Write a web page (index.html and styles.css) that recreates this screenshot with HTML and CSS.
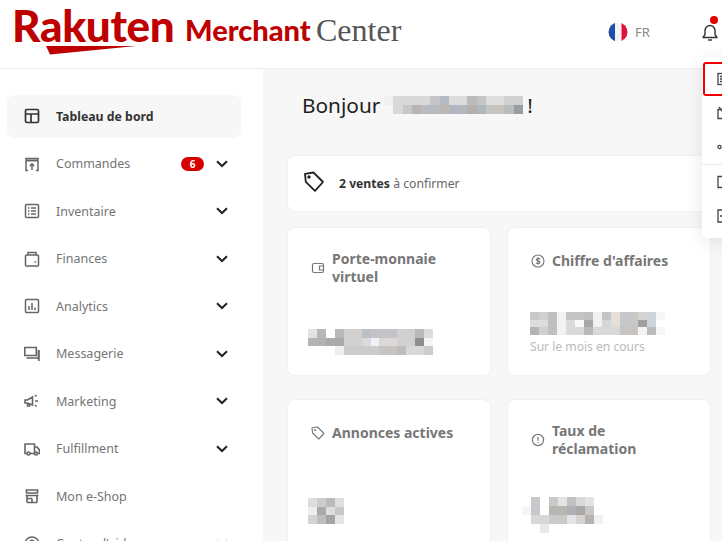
FILE: index.html
```html
<!DOCTYPE html>
<html lang="fr">
<head>
<meta charset="utf-8">
<title>Rakuten Merchant Center</title>
<link rel="stylesheet" href="styles.css">
</head>
<body>
<div class="page">
  <header class="header">
    <div class="logo">
      <div class="logo-rakuten">
        <span class="logo-word">Rakuten</span>
        <svg class="logo-swoosh" width="90" height="9" viewBox="0 0 90 9"><path d="M0 0H90L4 8.500Z" fill="#bf0000"/></svg>
      </div>
      <span class="logo-merchant">Merchant</span>
      <span class="logo-center">Center</span>
    </div>
    <div class="header-tools">
      <svg class="flag" width="20" height="20" viewBox="0 0 20 20"><defs><clipPath id="fc"><circle cx="10" cy="10" r="9.500"/></clipPath></defs><g clip-path="url(#fc)"><rect width="7" height="20" fill="#1f4fa8"/><rect x="7" width="6.500" height="20" fill="#f4f4f4"/><rect x="13.500" width="7" height="20" fill="#e0103a"/></g></svg>
      <span class="lang">FR</span>
      <span class="bell">
        <svg width="18" height="20" viewBox="0 0 18 20" fill="none" stroke="#333" stroke-width="1.400"><path d="M2 15.500h14l-2-3V8.500a5 5 0 0 0-10 0v4Z" stroke-linejoin="round"/><path d="M7 18h4"/></svg>
        <i class="bell-dot"></i>
      </span>
    </div>
  </header>
  <div class="body">
    <nav class="sidebar">
      <a class="nav-item active">
        <svg class="nav-icon" viewBox="0 0 16 16" fill="none" stroke="#333" stroke-width="1.700"><rect x="1.500" y="1.500" width="13" height="13" rx="1.500"/><path d="M1.500 6h13M7 6v8.500"/></svg>
        <span class="nav-label">Tableau de bord</span>
      </a>
      <a class="nav-item">
        <svg class="nav-icon" viewBox="0 0 16 16" fill="none" stroke="#666" stroke-width="1.500"><path d="M4 14.500H2V2.500h12v12h-2"/><path d="M2 4.500h12" stroke-width="2"/><path d="M8 14V8M5.800 10 8 7.800 10.200 10"/></svg>
        <span class="nav-label">Commandes</span>
        <span class="badge">6</span>
        <svg class="chev" viewBox="0 0 12 8" fill="none" stroke="#222" stroke-width="2"><path d="M1 1.200 6 6l5-4.800"/></svg>
      </a>
      <a class="nav-item">
        <svg class="nav-icon" viewBox="0 0 16 16" fill="none" stroke="#666" stroke-width="1.500"><rect x="1.500" y="1.500" width="13" height="13" rx="1"/><path d="M4 5h1.500M7 5h5M4 8h1.500M7 8h5M4 11h1.500M7 11h5"/></svg>
        <span class="nav-label">Inventaire</span>
        <svg class="chev" viewBox="0 0 12 8" fill="none" stroke="#222" stroke-width="2"><path d="M1 1.200 6 6l5-4.800"/></svg>
      </a>
      <a class="nav-item">
        <svg class="nav-icon" viewBox="0 0 16 16" fill="none" stroke="#666" stroke-width="1.500"><rect x="1.500" y="4" width="13" height="11" rx="1"/><path d="M4 4V1.500h8V4"/><path d="M10.500 11h1.500"/></svg>
        <span class="nav-label">Finances</span>
        <svg class="chev" viewBox="0 0 12 8" fill="none" stroke="#222" stroke-width="2"><path d="M1 1.200 6 6l5-4.800"/></svg>
      </a>
      <a class="nav-item">
        <svg class="nav-icon" viewBox="0 0 16 16" fill="none" stroke="#666" stroke-width="1.500"><rect x="1.500" y="1.500" width="13" height="13" rx="1"/><path d="M5 12V8M8 12V5M11 12v-2.500"/></svg>
        <span class="nav-label">Analytics</span>
        <svg class="chev" viewBox="0 0 12 8" fill="none" stroke="#222" stroke-width="2"><path d="M1 1.200 6 6l5-4.800"/></svg>
      </a>
      <a class="nav-item">
        <svg class="nav-icon" viewBox="0 0 16 16" fill="none" stroke="#666" stroke-width="1.600"><path d="M.8 1.500h11.500v8H.8Z"/><path d="M2.500 12h12V4" /><path d="M14.800 4v11" stroke-width="1.800"/></svg>
        <span class="nav-label">Messagerie</span>
        <svg class="chev" viewBox="0 0 12 8" fill="none" stroke="#222" stroke-width="2"><path d="M1 1.200 6 6l5-4.800"/></svg>
      </a>
      <a class="nav-item">
        <svg class="nav-icon" viewBox="0 0 16 16" fill="none" stroke="#666" stroke-width="1.600"><path d="M1 7h2.500l5-3v8l-5-2H1Z"/><path d="M3.500 10v3h2v-2.500M11 3.500l1.500-1.500M11 8h3M11 12l1.500 1.500" /></svg>
        <span class="nav-label">Marketing</span>
        <svg class="chev" viewBox="0 0 12 8" fill="none" stroke="#222" stroke-width="2"><path d="M1 1.200 6 6l5-4.800"/></svg>
      </a>
      <a class="nav-item">
        <svg class="nav-icon" viewBox="0 0 16 16" fill="none" stroke="#666" stroke-width="1.600"><path d="M3 12.500H1V3h9.500v9.500H6"/><path d="M10.500 6h2.500l2.500 3v3.500H14"/><circle cx="4.500" cy="12.500" r="1.500"/><circle cx="12" cy="12.500" r="1.500"/></svg>
        <span class="nav-label">Fulfillment</span>
        <svg class="chev" viewBox="0 0 12 8" fill="none" stroke="#222" stroke-width="2"><path d="M1 1.200 6 6l5-4.800"/></svg>
      </a>
      <a class="nav-item">
        <svg class="nav-icon" viewBox="0 0 16 16" fill="none" stroke="#666" stroke-width="1.600"><path d="M2.500 2h11v3h-11ZM1.500 7.500h13M3 7.500V14.500M13 7.500V14.500M3 14.500h10M8 10.500H3M8 10.500v4"/></svg>
        <span class="nav-label">Mon e-Shop</span>
      </a>
      <a class="nav-item">
        <svg class="nav-icon" viewBox="0 0 16 16" fill="none" stroke="#666" stroke-width="1.500"><circle cx="8" cy="8" r="7"/><path d="M6 6.200a2 2 0 1 1 2.800 1.800c-.6.300-.8.700-.8 1.500M8 11.500v1"/></svg>
        <span class="nav-label">Centre d'aide</span>
        <svg class="chev" viewBox="0 0 12 8" fill="none" stroke="#222" stroke-width="2"><path d="M1 1.200 6 6l5-4.800"/></svg>
      </a>
    </nav>
    <main class="main">
      <h1 class="greeting">
        <span>Bonjour</span>
        <svg class="mosaic" width="139" height="18" viewBox="0 0 15 2" preserveAspectRatio="none" shape-rendering="crispEdges"><path fill="#f0f0f0" d="M0 0h1v1H0z"/><path fill="#d8d8da" d="M1 0h1v2H1z"/><path fill="#d9d9d9" d="M2 0h3v1H2z"/><path fill="#c8c8cc" d="M2 1h1v1H2z"/><path fill="#b9b4b2" d="M3 1h1v1H3z"/><path fill="#b7bcc0" d="M4 1h2v1H4z"/><path fill="#c6c6c6" d="M5 0h1v1H5z"/><path fill="#b5bac6" d="M6 0h1v1H6z"/><path fill="#bdb8b4" d="M6 1h1v1H6z"/><path fill="#afb5c2" d="M7 1h1v1H7z"/><path fill="#dcdcdc" d="M7 0h2v1H7z"/><path fill="#b3b8bc" d="M8 1h1v1H8z"/><path fill="#bbb" d="M9 0h1v1H9z"/><path fill="#b5b0ac" d="M9 1h1v1H9z"/><path fill="#c5c5c5" d="M10 0h1v1H10z"/><path fill="#afb8ba" d="M10 1h1v1H10z"/><path fill="#dedede" d="M11 0h2v1H11z"/><path fill="#c2c4c4" d="M11 1h1v1H11z"/><path fill="#c5c4b8" d="M12 1h1v1H12z"/><path fill="#d0d0d0" d="M13 0h2v1H13z"/><path fill="#b8bec0" d="M13 1h1v1H13z"/><path fill="#9a9ea4" d="M14 1h1v1H14z"/></svg>
        <span>!</span>
      </h1>
      <section class="alert">
        <svg class="alert-icon" width="22" height="22" viewBox="0 0 22 22" fill="none" stroke="#222" stroke-width="1.800" stroke-linejoin="round"><path d="M2 2.800 10.500 1.500 20 11 12 19.800 2.800 10.800Z"/><circle cx="6" cy="6" r=".8" fill="#222"/></svg>
        <p class="alert-text"><b>2 ventes</b> à confirmer</p>
      </section>
      <div class="cards">
        <article class="card">
          <div class="card-title">
            <svg class="card-icon" viewBox="0 0 14 14" fill="none" stroke="#777" stroke-width="1.200"><rect x="1.500" y="2.500" width="11" height="9" rx="1.500"/><path d="M12.500 5H8.500v4h4"/></svg>
            <span>Porte-monnaie virtuel</span>
          </div>
          <svg class="mosaic-v mosaic-wide" width="125" height="26" viewBox="0 0 14 3" preserveAspectRatio="none" shape-rendering="crispEdges"><path fill="#e4e2e2" d="M0 0h2v1H0z"/><path fill="#b9b6b6" d="M1 0h1v1H1z"/><path fill="#b5b2b2" d="M0 1h3v1H0z"/><path fill="#aaa" d="M2 1h2v1H2z"/><path fill="#eee" d="M3 2h1v1H3z"/><path fill="#b8b8b8" d="M3 0h1v1H3z"/><path fill="#d2d0d0" d="M4 0h2v2H4z"/><path fill="#ccc" d="M4 2h4v1H4z"/><path fill="#bcc0c4" d="M6 0h1v1H6z"/><path fill="#d8dadc" d="M6 1h1v1H6z"/><path fill="#c4c4c8" d="M7 0h2v1H7z"/><path fill="#eef2f4" d="M7 1h1v1H7z"/><path fill="#dcd8d6" d="M8 1h2v1H8z"/><path fill="#c8c4c4" d="M8 2h2v1H8z"/><path fill="#c2c4c8" d="M9 0h1v1H9z"/><path fill="#d0d0d0" d="M10 0h2v2H10z"/><path fill="#c2bcb8" d="M10 2h1v1H10z"/><path fill="#d8d8d8" d="M11 2h2v1H11z"/><path fill="#b8b8b8" d="M12 0h1v1H12z"/><path fill="#8e8e8e" d="M12 1h1v1H12z"/><path fill="#dcdcdc" d="M13 0h1v1H13z"/><path fill="#f2f4f6" d="M13 1h1v1H13z"/><path fill="#ccc" d="M13 2h1v1H13z"/></svg>
        </article>
        <article class="card">
          <div class="card-title card-title-single">
            <svg class="card-icon" viewBox="0 0 14 14" fill="none" stroke="#777" stroke-width="1.100"><circle cx="7" cy="7" r="6"/><path d="M9 5.200C8.500 4.200 5.200 4 5.200 5.600 5.200 7.200 9 6.600 9 8.400 9 10 5.500 9.800 5 8.800M7 3.300v7.400"/></svg>
            <span>Chiffre d'affaires</span>
          </div>
          <svg class="mosaic-v mosaic-shift" width="135" height="23" viewBox="0 0 15 3" preserveAspectRatio="none" shape-rendering="crispEdges"><path fill="#c8c8c8" d="M0 0h1v1H0z"/><path fill="#c0c0c0" d="M2 0h1v3H2z"/><path fill="#dcdcdc" d="M0 1h2v1H0z"/><path fill="#b4b4b4" d="M0 2h1v1H0z"/><path fill="#d0d0d0" d="M1 0h1v1H1zM1 2h1v1H1z"/><path fill="#f0f2f4" d="M3 0h1v3H3z"/><path fill="#c4c4c4" d="M4 0h2v1H4z"/><path fill="#dadada" d="M4 1h1v2H4z"/><path fill="#f8f8f8" d="M5 1h1v1H5z"/><path fill="#d8d8d8" d="M5 2h1v1H5z"/><path fill="#c0c0c0" d="M6 0h1v1H6z"/><path fill="#a8a8a8" d="M6 1h1v1H6z"/><path fill="#b8b8b8" d="M6 2h1v1H6z"/><path fill="#f2f2f2" d="M7 0h1v2H7z"/><path fill="#d8d8d8" d="M7 2h3v1H7z"/><path fill="#c4c4c8" d="M8 0h1v1H8z"/><path fill="#d4d6da" d="M8 1h1v1H8z"/><path fill="#e4dfd8" d="M9 0h1v2H9z"/><path fill="#c4c8cc" d="M10 0h1v2H10z"/><path fill="#c8c4c0" d="M10 2h2v1H10z"/><path fill="#c8c8c8" d="M11 0h1v2H11z"/><path fill="#d4d4d4" d="M12 0h1v1H12z"/><path fill="#a0a0a0" d="M12 1h1v1H12z"/><path fill="#f4f4f4" d="M12 2h1v1H12z"/><path fill="#cfd4d8" d="M13 0h1v2H13z"/><path fill="#bbb" d="M13 2h1v1H13z"/><path fill="#f4f6f8" d="M14 0h1v1H14zM14 2h1v1H14z"/></svg>
          <p class="card-sub">Sur le mois en cours</p>
        </article>
        <article class="card">
          <div class="card-title card-title-single">
            <svg class="card-icon" viewBox="0 0 14 14" fill="none" stroke="#777" stroke-width="1.100" stroke-linejoin="round"><path d="M1 1.800 6.500 1 13 7.500 7.800 13 1.600 7Z"/><circle cx="4" cy="4" r=".5"/></svg>
            <span>Annonces actives</span>
          </div>
          <svg class="mosaic-v mosaic-third" width="36" height="26" viewBox="0 0 4 3" preserveAspectRatio="none" shape-rendering="crispEdges"><path fill="#ddd" d="M0 0h1v1H0z"/><path fill="#ccc" d="M1 0h1v1H1z"/><path fill="#bbb" d="M2 0h1v1H2z"/><path fill="#dfdfdf" d="M3 0h1v1H3z"/><path fill="#eee" d="M0 1h1v1H0z"/><path fill="#aaa" d="M1 1h1v1H1z"/><path fill="#ddd" d="M2 1h1v1H2z"/><path fill="#c4c8cc" d="M3 1h1v1H3z"/><path fill="#d4d4d4" d="M0 2h1v1H0z"/><path fill="#bbbec2" d="M1 2h1v1H1z"/><path fill="#a4a4a4" d="M2 2h1v1H2z"/><path fill="#e2e4e6" d="M3 2h1v1H3z"/></svg>
        </article>
        <article class="card">
          <div class="card-title">
            <svg class="card-icon" viewBox="0 0 14 14" fill="none" stroke="#777" stroke-width="1.200"><circle cx="7" cy="7" r="5.600"/><path d="M7 4v3.800M7 9.200v1"/></svg>
            <span>Taux de réclamation</span>
          </div>
          <svg class="mosaic-v mosaic-low" width="81" height="36" viewBox="0 0 9 4" preserveAspectRatio="none" shape-rendering="crispEdges"><path fill="#c8c8cc" d="M1 0h1v2H1z"/><path fill="#cacaca" d="M3 0h1v1H3z"/><path fill="#e4e4e4" d="M4 0h1v1H4z"/><path fill="#c4c0c0" d="M5 0h1v1H5z"/><path fill="#d8d8dc" d="M6 0h1v1H6z"/><path fill="#e4e4e4" d="M7 0h1v1H7z"/><path fill="#fbf4f4" d="M0 1h1v1H0z"/><path fill="#b8b6b2" d="M3 1h2v1H3z"/><path fill="#b0b0b6" d="M5 1h1v1H5z"/><path fill="#aca8a8" d="M6 1h1v1H6z"/><path fill="#c8c8c8" d="M7 1h1v1H7z"/><path fill="#d8d8da" d="M1 2h2v1H1z"/><path fill="#cacaca" d="M3 2h2v1H3z"/><path fill="#e2e4e6" d="M5 2h1v1H5z"/><path fill="#d4d4d4" d="M6 2h1v1H6z"/><path fill="#b8b2ae" d="M7 2h1v1H7z"/><path fill="#eef2f6" d="M8 2h1v1H8z"/><path fill="#e8e8e8" d="M2 3h1v1H2z"/></svg>
        </article>
      </div>
    </main>
  </div>
  <aside class="menu">
    <div class="menu-item menu-item-focus">
      <svg class="menu-icon" viewBox="0 0 14 14" fill="none" stroke="#444" stroke-width="1.300"><rect x="1" y="1.500" width="12" height="11"/><path d="M3 4.500h8M3 7h8M3 9.500h8"/></svg>
    </div>
    <div class="menu-item">
      <svg class="menu-icon" viewBox="0 0 14 14" fill="none" stroke="#444" stroke-width="1.300"><path d="M1 3.500h10v9H1zM2 1l9 11"/></svg>
    </div>
    <div class="menu-item">
      <svg class="menu-icon" viewBox="0 0 14 14" fill="none" stroke="#444" stroke-width="1.300"><circle cx="2.500" cy="7" r="1.600"/><circle cx="9" cy="7" r="1.800"/></svg>
    </div>
    <div class="menu-divider"></div>
    <div class="menu-item">
      <svg class="menu-icon" viewBox="0 0 14 14" fill="none" stroke="#444" stroke-width="1.300"><path d="M13 1.500H1v11h12"/></svg>
    </div>
    <div class="menu-item">
      <svg class="menu-icon" viewBox="0 0 14 14" fill="none" stroke="#444" stroke-width="1.300"><path d="M13 1H1v12h12M3 7h8"/></svg>
    </div>
  </aside>
</div>
</body>
</html>
```
FILE: styles.css
```css
* { box-sizing: border-box; }
html, body { margin: 0; padding: 0; }
body { font-family: "Noto Sans", "Open Sans", sans-serif; color: #333; background: #f7f7f7; }
.page { position: relative; width: 722px; height: 541px; overflow: hidden; display: flex; flex-direction: column; }

.header { flex: none; height: 69px; background: #fff; border-bottom: 1px solid #efefef; display: flex; align-items: center; justify-content: space-between; padding: 0 3px 6px 12px; }
.logo { display: flex; align-items: flex-start; }
.logo-rakuten { width: 173px; position: relative; height: 50px; }
.logo-word { display: block; font-family: "Lato", sans-serif; font-weight: 900; font-size: 44px; line-height: 38px; letter-spacing: -.3px; color: #bf0000; }
.logo-swoosh { position: absolute; left: 34px; top: 40px; }
.logo-merchant { font-family: "Lato", sans-serif; font-weight: 900; font-size: 29px; line-height: 34px; margin-top: 7px; color: #bf0000; width: 131px; }
.logo-center { font-family: "Liberation Serif", serif; font-size: 32px; line-height: 34px; margin-top: 7px; color: #555; }
.header-tools { display: flex; align-items: center; margin-top: 2px; }
.flag { display: block; }
.lang { margin-left: 7px; font-size: 13px; color: #888; width: 66px; }
.bell { position: relative; display: block; width: 18px; height: 20px; }
.bell svg { display: block; }
.bell-dot { position: absolute; left: 9px; top: -6px; width: 8px; height: 8px; border-radius: 50%; background: #e00000; }

.body { flex: 1; display: flex; min-height: 0; }
.sidebar { flex: none; width: 263px; background: #fff; padding: 26px 22px 0 7px; display: flex; flex-direction: column; gap: 4.500px; }
.nav-item { flex: none; height: 43px; display: flex; align-items: center; padding: 0 13px 1px 17px; border-radius: 8px; font-size: 12.500px; color: #757575; }
.nav-item.active { background: #f7f7f7; color: #333; font-weight: 700; font-size: 12.300px; }
.nav-icon { flex: none; width: 16px; height: 16px; margin-right: 16px; }
.nav-label { flex: 1; }
.badge { width: 23px; height: 14px; border-radius: 7px; background: #d70000; color: #fff; font-size: 10px; font-weight: 700; line-height: 14px; text-align: center; margin-right: 12px; }
.chev { flex: none; width: 12px; height: 8px; }

.main { flex: 1; min-width: 0; padding: 23px 11px 0 24px; }
.greeting { margin: 0 0 37px 15px; height: 26px; display: flex; align-items: center; gap: 4px; font-size: 20.800px; line-height: 26px; font-weight: 400; color: #222; }
.mosaic { display: block; }
.alert { height: 57px; background: #fff; border: 1px solid #f1f1f1; border-radius: 8px; display: flex; align-items: center; padding: 0 15px; }
.alert-icon { flex: none; margin-right: 14px; margin-top: -4px; }
.alert-text { margin: 0; font-size: 12.200px; color: #666; }
.alert-text b { color: #333; }
.cards { display: grid; grid-template-columns: 204px 204px; gap: 23px 16px; margin-top: 15px; }
.card { height: 149px; background: #fff; border: 1px solid #f1f1f1; border-radius: 8px; padding: 22px 20px 20px 23px; display: flex; flex-direction: column; }
.card-title { display: flex; align-items: center; font-size: 14px; line-height: 18px; font-weight: 700; color: #777; }
.card-title-single { margin-top: 2px; }
.card-icon { flex: none; width: 14px; height: 14px; margin-right: 7px; }
.mosaic-v { display: block; margin-top: auto; flex: none; }
.mosaic-wide { margin-left: -3px; }
.mosaic-third { margin: auto 0 3px -3px; }
.mosaic-shift { margin-left: -1px; }
.mosaic-low { margin: auto 0 -6px -9px; }
.card-sub { margin: 4px 0 0 -1px; font-size: 12.100px; line-height: 16px; color: #bbb; }

.menu { position: absolute; left: 702px; top: 57px; width: 60px; height: 181px; background: #fff; border-radius: 6px; box-shadow: 0 3px 18px rgba(0,0,0,.1); padding: 5px 0 0 1px; display: flex; flex-direction: column; }
.menu-item { height: 34px; display: flex; align-items: center; padding-left: 12px; border: 2px solid transparent; }
.menu-item-focus { border-color: #f00000; border-radius: 3px; }
.menu-divider { height: 1px; background: #e8e8e8; margin: 0 0 0 -1px; }
.menu-icon { flex: none; width: 14px; height: 14px; }
```
